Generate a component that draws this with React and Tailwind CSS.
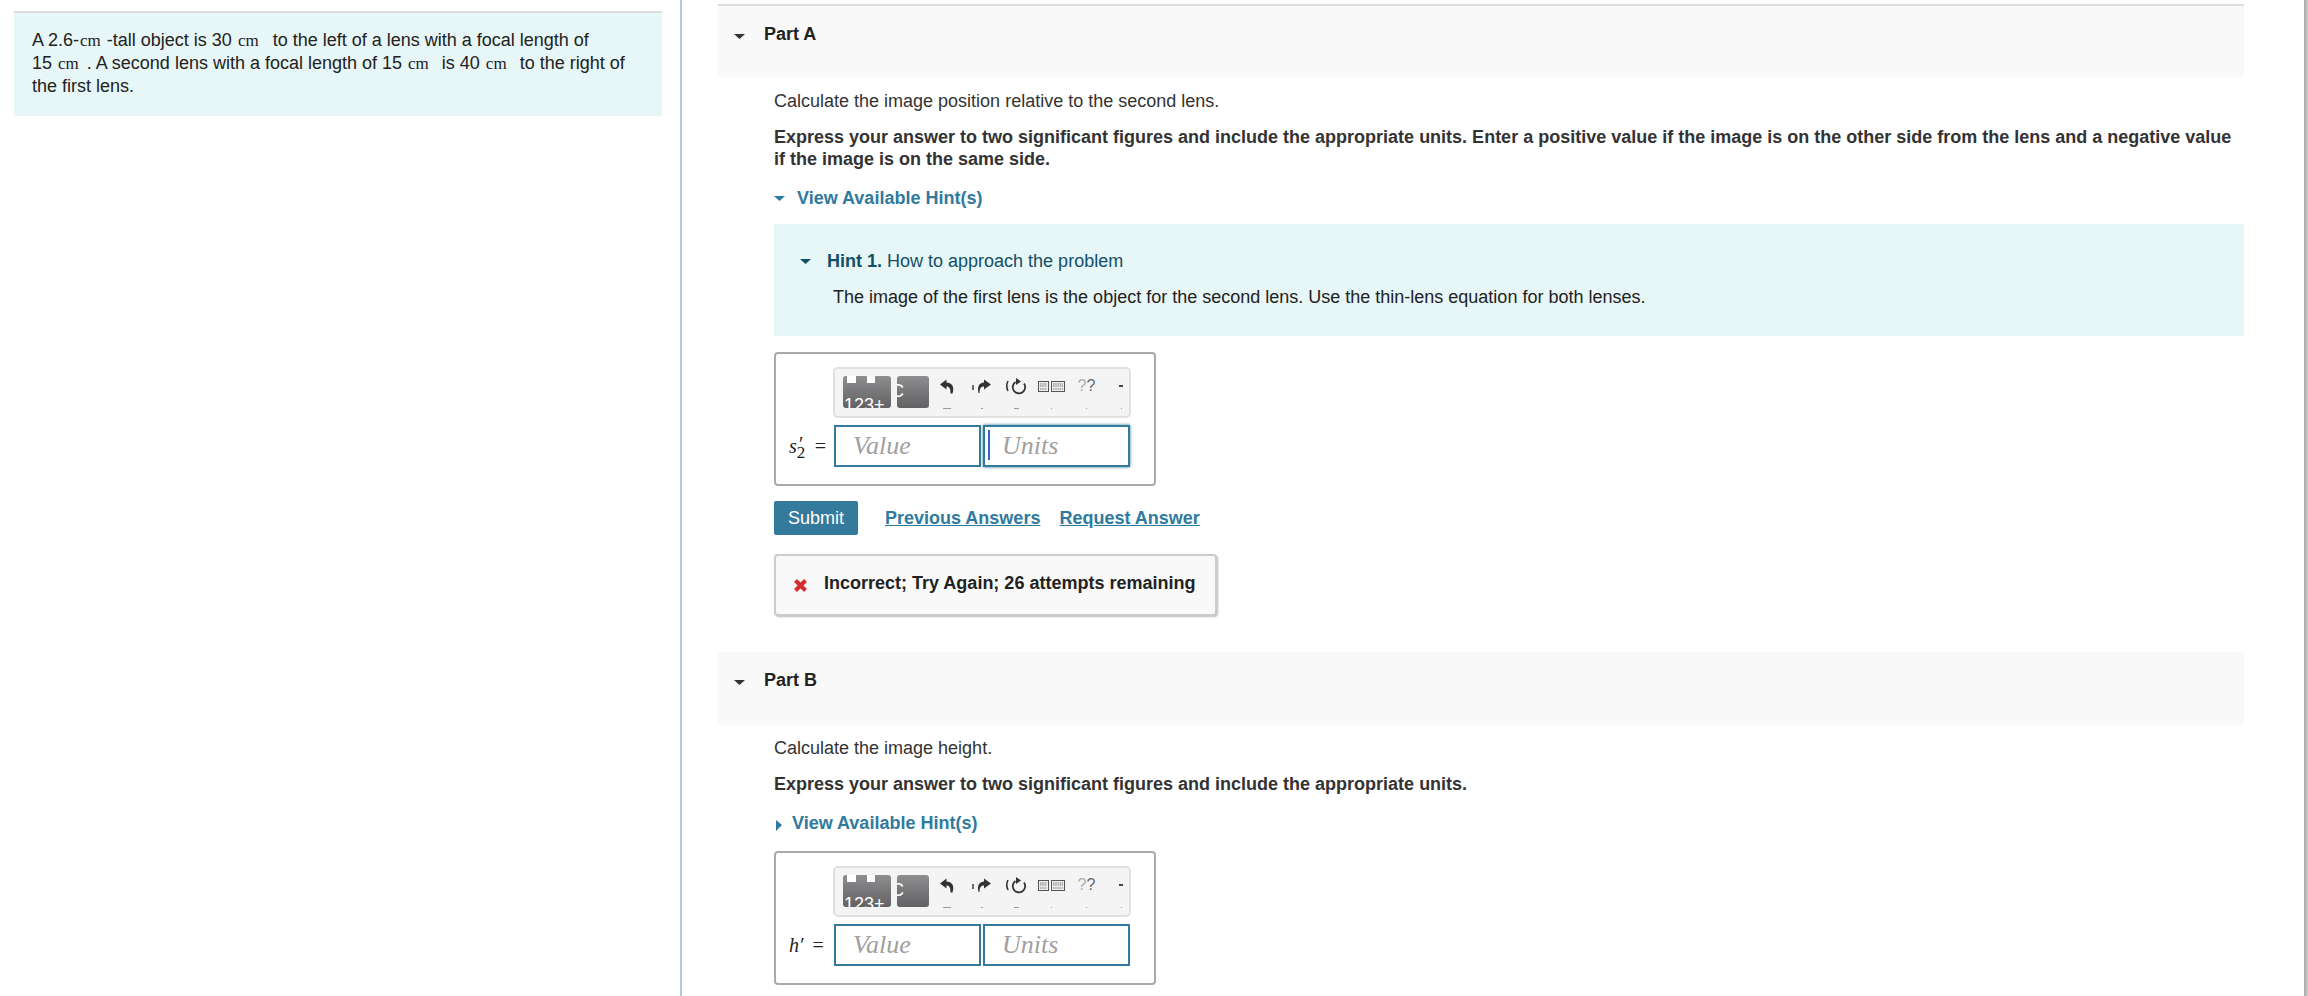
import React from 'react'

function Caret({ right, color = '#333' }) {
  return (
    <svg width="12" height="12" viewBox="0 0 12 12" className="shrink-0">
      {right
        ? <path d="M2 1 L8 6 L2 12 Z" fill={color} />
        : <path d="M0 2 H11 L5.5 7 Z" fill={color} />}
    </svg>
  )
}

function Cm({ className = 'mr-[1px]' }) {
  return <span className={`ml-[1px] font-['Liberation_Serif',serif] text-[17px] ${className}`}>cm</span>
}

function Block({ w, children }) {
  return (
    <div className="relative h-[32px] shrink-0 overflow-hidden rounded-[3px] bg-gradient-to-b from-[#8e8e90] to-[#626264]" style={{ width: w }}>
      {children}
    </div>
  )
}

function Tool({ dot = 1, className = 'w-[35px]', children }) {
  return (
    <div className={`flex h-[33px] shrink-0 flex-col items-center justify-between ${className}`}>
      <div className="flex h-[20px] items-center justify-center">{children}</div>
      <span className="h-[1px] bg-[#999]" style={{ width: dot }} />
    </div>
  )
}

function Toolbar() {
  return (
    <div className="flex h-[51px] w-[298px] items-start rounded-[5px] border-2 border-[#e0e0e0] bg-[#f4f4f4] pl-[8px] pt-[7px]">
      <Block w={48}>
        <span className="absolute left-[4px] top-0 h-[7px] w-[9px] bg-white" />
        <span className="absolute left-[24px] top-0 h-[7px] w-[8px] bg-white" />
        <span className="absolute left-[1px] top-[17px] text-[18px] leading-[24px] text-white">123+</span>
      </Block>
      <div className="ml-[6px] shrink-0">
        <Block w={32}>
          <span className="absolute left-[-6px] top-[5px] text-[18px] leading-[20px] text-white">C</span>
        </Block>
      </div>
      <div className="flex">
        <Tool dot={8}>
          <svg width="14" height="15" viewBox="0 0 14 15"><path d="M6.5 0.5 L0 5.5 L6.5 10.5 V7.5 C9.5 7.5 10.5 9.5 10.5 14.5 H12.5 C14.5 8 12.5 3.8 6.5 3.5 Z" fill="#333" /></svg>
        </Tool>
        <Tool dot={2}>
          <svg width="19" height="15" viewBox="0 0 19 15"><path d="M12 0.5 L19 5.5 L12 10.5 V7.5 C9 7.5 7.5 9.5 7.5 14 H6.5 C5 8 7 3.8 12 3.5 Z" fill="#333" /><path d="M1 6 V11" stroke="#333" strokeWidth="1.4" /></svg>
        </Tool>
        <Tool dot={5}>
          <svg width="23" height="18" viewBox="0 0 23 18">
            <path d="M3 4 Q0.5 9 3 14" stroke="#333" strokeWidth="1.6" fill="none" />
            <path d="M10.5 5 A6.2 6.2 0 1 0 19 6.5" stroke="#333" strokeWidth="1.8" fill="none" />
            <path d="M11 1 L16 4.5 L11 8 Z" fill="#333" />
          </svg>
        </Tool>
        <Tool>
          <svg width="27" height="11" viewBox="0 0 27 11">
            <rect x="0.5" y="0.5" width="10" height="10" fill="#eee" stroke="#555" />
            <rect x="13.5" y="0.5" width="13" height="10" fill="#eee" stroke="#555" />
            <path d="M2 3 H9 M2 5 H9 M2 8 H9 M15 3 H25 M15 5 H25 M15 8 H25" stroke="#777" strokeWidth="1" strokeDasharray="1.5 0.7" />
          </svg>
        </Tool>
        <Tool>
          <span className="text-[16px] leading-[18px] text-[#666]">
            <span className="opacity-50">?</span><span>?</span>
          </span>
        </Tool>
        <Tool className="ml-[13px] w-[8px]">
          <span className="h-[2px] w-[4px] bg-[#444]" />
        </Tool>
      </div>
    </div>
  )
}

function UnitInput({ placeholder, focused }) {
  return (
    <div className={`relative h-[42px] w-[147px] border-2 border-[#337a9c] bg-white ${focused ? 'shadow-[0_0_3px_#337a9c]' : ''}`}>
      {focused && <span className="absolute left-[3px] top-[3px] h-[30px] w-[2px] bg-[#3a5fd0]" />}
      <input
        readOnly
        placeholder={placeholder}
        className="h-full w-full bg-transparent pl-[17px] font-['Liberation_Serif',serif] text-[26px] italic outline-none placeholder:text-[#a0a0a0]"
      />
    </div>
  )
}

function AnswerBox({ symbol, focused }) {
  return (
    <div className="w-[382px] rounded-[4px] border-2 border-[#aaa] bg-white pb-[17px] pl-[13px] pt-[13px]">
      <div className="ml-[44px]"><Toolbar /></div>
      <div className="mt-[7px] flex items-center">
        <span className="flex w-[45px] items-center font-['Liberation_Serif',serif] text-[20px] text-[#222]">{symbol}</span>
        <UnitInput placeholder="Value" />
        <span className="w-[2px]" />
        <UnitInput placeholder="Units" focused={focused} />
      </div>
    </div>
  )
}

function PartHeader({ label, className = '' }) {
  return (
    <div className={`flex h-[73px] items-start bg-[#f9f9f9] pl-[16px] pt-[17px] ${className}`}>
      <span className="mr-[18px] mt-[9px]"><Caret /></span>
      <span className="text-[18px] font-bold leading-[22px] text-[#222]">{label}</span>
    </div>
  )
}

export default function App() {
  return (
    <div className="flex h-[996px] w-[2308px] overflow-hidden bg-white font-['Liberation_Sans',Arial,sans-serif] text-[18px] leading-[22px] text-[#333]">
      <div className="w-[680px] shrink-0 pl-[14px] pt-[11px]">
        <div className="h-[105px] w-[648px] border-t-2 border-[#ddd] bg-[#e7f6f6] pl-[18px] pt-[16px] text-[#222]">
          A 2.6-<Cm /> -tall object is 30 <Cm className="mr-[4px]" />&nbsp; to the left of a lens with a focal length of<br />
          15 <Cm className="mr-[3px]" /> . A second lens with a focal length of 15 <Cm className="mr-[3px]" />&nbsp; is 40 <Cm className="mr-[3px]" />&nbsp; to the right of<br />
          the first lens.
        </div>
      </div>
      <div className="w-[2px] shrink-0 bg-[#b9c6dd]" />
      <div className="w-[36px] shrink-0" />
      <div className="w-[1526px] shrink-0 pt-[4px]">
        <PartHeader label="Part A" className="border-t-2 border-[#ddd]" />
        <div className="pl-[56px]">
          <p className="mt-[13px]">Calculate the image position relative to the second lens.</p>
          <p className="mt-[14px] font-bold">Express your answer to two significant figures and include the appropriate units. Enter a positive value if the image is on the other side from the lens and a negative value if the image is on the same side.</p>
          <div className="mt-[17px] flex items-center font-bold text-[#2f7a9e]">
            <span className="mr-[11px] mt-[4px]"><Caret color="#2f7a9e" /></span>
            View Available Hint(s)
          </div>
          <div className="mt-[15px] h-[112px] bg-[#e7f6f6] pl-[26px] pt-[26px]">
            <div className="flex items-center text-[#124f68]">
              <span className="mr-[15px] mt-[4px]"><Caret color="#124f68" /></span>
              <b className="mr-[5px]">Hint 1.</b> How to approach the problem
            </div>
            <p className="ml-[33px] mt-[14px] text-[#222]">The image of the first lens is the object for the second lens. Use the thin-lens equation for both lenses.</p>
          </div>
          <div className="mt-[16px]">
            <AnswerBox
              focused
              symbol={
                <>
                  <i>s</i>
                  <span className="relative mr-[8px] inline-block h-[22px] w-[10px]">
                    <i className="absolute left-[1px] top-[-2px]">&#8242;</i>
                    <span className="absolute left-0 top-[8px] text-[17px] leading-[20px]">2</span>
                  </span>
                  =
                </>
              }
            />
          </div>
          <div className="mt-[15px] flex items-center">
            <span className="flex h-[34px] w-[84px] items-center justify-center rounded-[2px] bg-[#337a9c] text-white">Submit</span>
            <a className="ml-[27px] font-bold text-[#2f7a9e] underline">Previous Answers</a>
            <a className="ml-[19px] font-bold text-[#2f7a9e] underline">Request Answer</a>
          </div>
          <div className="mt-[19px] flex h-[62px] w-[443px] items-center rounded-[4px] border-2 border-[#ccc] bg-[#f9f9f9] pb-[4px] pl-[17px] font-bold text-[#222] shadow-[1px_1px_2px_#bbb]">
            <svg width="15" height="15" viewBox="0 0 15 15" className="mr-[16px] mt-[4px]"><path d="M2.5 2.5 L12.5 12.5 M12.5 2.5 L2.5 12.5" stroke="#d62b2b" strokeWidth="4" /></svg>
            Incorrect; Try Again; 26 attempts remaining
          </div>
        </div>
        <PartHeader label="Part B" className="mt-[36px]" />
        <div className="pl-[56px]">
          <p className="mt-[12px]">Calculate the image height.</p>
          <p className="mt-[14px] font-bold">Express your answer to two significant figures and include the appropriate units.</p>
          <div className="mt-[17px] flex items-center font-bold text-[#2f7a9e]">
            <span className="mr-[6px] mt-[4px]"><Caret right color="#2f7a9e" /></span>
            View Available Hint(s)
          </div>
          <div className="mt-[17px]">
            <AnswerBox symbol={<><i>h</i><i className="mr-[9px]">&#8242;</i>=</>} />
          </div>
        </div>
      </div>
      <div className="flex-1" />
      <div className="w-[4px] shrink-0 bg-gradient-to-r from-[#aaa] to-[#ccc]" />
    </div>
  )
}
